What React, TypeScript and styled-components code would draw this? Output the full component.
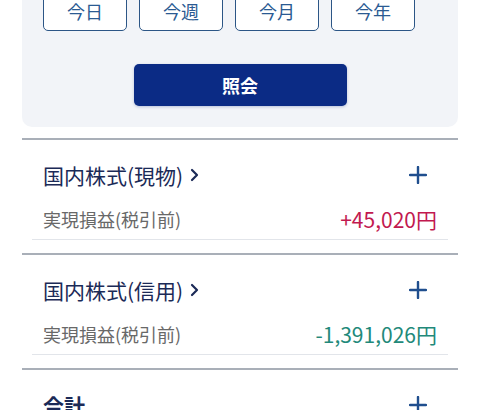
import React from "react";
import styled, { createGlobalStyle } from "styled-components";

const Global = createGlobalStyle`
  html, body { margin: 0; padding: 0; background: #ffffff; }
  body { font-family: "Noto Sans CJK JP", "Noto Sans", sans-serif; overflow: hidden; }
`;

const Page = styled.div`
  width: 480px;
  padding: 0 22px;
  box-sizing: border-box;
`;

const Panel = styled.div`
  margin-top: -7px;
  background: #f2f4f8;
  border-radius: 0 0 10px 10px;
  padding: 0 21px 21px;
  display: flex;
  flex-direction: column;
`;

const PeriodRow = styled.div`
  display: grid;
  grid-template-columns: repeat(4, 84px);
  gap: 12px;
`;

const PeriodButton = styled.button`
  height: 38px;
  box-sizing: border-box;
  border: 1.5px solid #2c5686;
  border-radius: 5px;
  background: #ffffff;
  color: #2a5a92;
  font-family: inherit;
  font-size: 18px;
  line-height: 1;
  padding: 0 0 2px;
`;

const SubmitButton = styled.button`
  align-self: center;
  margin-top: 33px;
  width: 213px;
  height: 42px;
  border: none;
  border-radius: 5px;
  background: #0b2b85;
  color: #ffffff;
  font-family: inherit;
  font-weight: 700;
  font-size: 18px;
  box-shadow: 0 1px 3px rgba(11, 43, 133, 0.25);
`;

const Sections = styled.div`
  margin-top: 11px;
`;

const Section = styled.section`
  border-top: 2px solid #a9afb8;
  padding-bottom: 13px;
`;

const TitleRow = styled.div`
  display: flex;
  align-items: center;
  justify-content: space-between;
  padding: 22px 31px 10px 21px;
`;

const Title = styled.div<{ $bold?: boolean }>`
  display: flex;
  align-items: center;
  gap: 7px;
  font-size: 21px;
  line-height: 26px;
  font-weight: ${(p) => (p.$bold ? 700 : 400)};
  color: #1b2a57;
`;

const DataRow = styled.div`
  margin: 0 10px;
  height: 41px;
  border-bottom: 1px solid #e2e5ea;
  display: flex;
  align-items: center;
  justify-content: space-between;
  padding: 0 11px;
`;

const Label = styled.span`
  font-size: 18px;
  color: #686868;
`;

const Value = styled.span<{ $tone: "up" | "down" }>`
  font-size: 21px;
  color: ${(p) => (p.$tone === "up" ? "#c2194f" : "#22897a")};
`;

const Chevron = () => (
  <svg width="9" height="14" viewBox="0 0 9 14" fill="none">
    <path d="M2 2l5 5-5 5" stroke="#1b2a57" strokeWidth="2.2" strokeLinecap="round" strokeLinejoin="round" />
  </svg>
);

const PlusIcon = () => (
  <svg width="18" height="18" viewBox="0 0 18 18" fill="none">
    <path d="M9 1v16M1 9h16" stroke="#1f4e8e" strokeWidth="2.4" strokeLinecap="round" />
  </svg>
);

const sections = [
  { title: "国内株式(現物)", value: "+45,020円", tone: "up" as const },
  { title: "国内株式(信用)", value: "-1,391,026円", tone: "down" as const },
];

export default function App() {
  return (
    <Page>
      <Global />
      <Panel>
        <PeriodRow>
          {["今日", "今週", "今月", "今年"].map((t) => (
            <PeriodButton key={t}>{t}</PeriodButton>
          ))}
        </PeriodRow>
        <SubmitButton>照会</SubmitButton>
      </Panel>
      <Sections>
        {sections.map((s) => (
          <Section key={s.title}>
            <TitleRow>
              <Title>
                {s.title}
                <Chevron />
              </Title>
              <PlusIcon />
            </TitleRow>
            <DataRow>
              <Label>実現損益(税引前)</Label>
              <Value $tone={s.tone}>{s.value}</Value>
            </DataRow>
          </Section>
        ))}
        <Section>
          <TitleRow>
            <Title $bold>合計</Title>
            <PlusIcon />
          </TitleRow>
        </Section>
      </Sections>
    </Page>
  );
}
